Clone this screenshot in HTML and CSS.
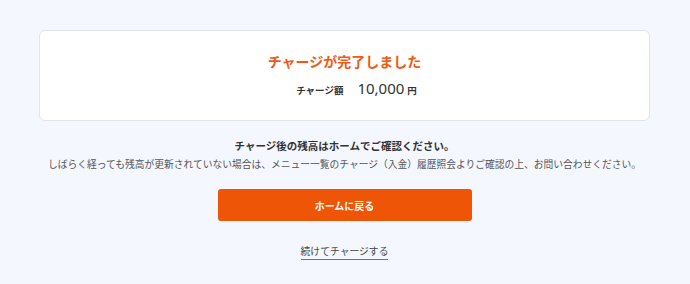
FILE: index.html
```html
<!DOCTYPE html>
<html lang="ja">
<head>
  <meta charset="UTF-8">
  <title>チャージ完了</title>
  <link rel="stylesheet" href="styles.css">
</head>
<body>
  <div class="page">
    <div class="card">
      <h1 class="title">チャージが完了しました</h1>
      <div class="amount">
        <span class="amount-label">チャージ額</span>
        <span class="amount-value">10,000</span>
        <span class="amount-unit">円</span>
      </div>
    </div>

    <div class="message">
      <p class="message-main">チャージ後の残高はホームでご確認ください。</p>
      <p class="message-sub">しばらく経っても残高が更新されていない場合は、メニュー一覧のチャージ（入金）履歴照会よりご確認の上、お問い合わせください。</p>
    </div>

    <div class="actions">
      <button class="primary">ホームに戻る</button>
      <a href="#" class="link">続けてチャージする</a>
    </div>
  </div>
</body>
</html>
```

FILE: styles.css
```css
body {
  margin: 0;
  background: #f4f7fe;
  font-family: "Noto Sans CJK JP", "Noto Sans", sans-serif;
  color: #333;
}

.page {
  width: 611px;
  margin: 0 0 0 39px;
  padding-top: 30px;
}

.card {
  background: white;
  border: 1px solid #e1e4ea;
  border-radius: 6px;
  padding: 20px 0 20px;
  text-align: center;
}

.title {
  margin: 0 0 7px;
  font-size: 14px;
  line-height: 20px;
  font-weight: bold;
  color: #f05a12;
}

.amount {
  line-height: 20px;
  display: flex;
  justify-content: center;
  align-items: baseline;
  padding-left: 24px;
}

.amount-label {
  font-size: 9.5px;
  font-weight: bold;
  margin-right: 14px;
}

.amount-value {
  font-family: "Noto Sans", sans-serif;
  font-size: 15px;
  margin-right: 3px;
}

.amount-unit {
  font-size: 9.5px;
  font-weight: bold;
}

.message {
  margin-top: 16px;
  text-align: center;
}

.message p {
  margin: 0;
  line-height: 18px;
}

.message-main {
  font-size: 10.5px;
  font-weight: bold;
}

.message-sub {
  font-size: 9.75px;
  color: #555;
}

.actions {
  display: flex;
  flex-direction: column;
  align-items: center;
  margin-top: 16px;
}

.primary {
  width: 254px;
  height: 32px;
  border: none;
  border-radius: 3px;
  background: #ee5506;
  color: white;
  font-family: inherit;
  font-size: 10px;
  font-weight: bold;
  cursor: pointer;
}

.link {
  margin-top: 23px;
  font-size: 9.8px;
  line-height: 15px;
  color: #444;
  text-decoration: none;
  border-bottom: 1px solid #3a7fc1;
}
```
